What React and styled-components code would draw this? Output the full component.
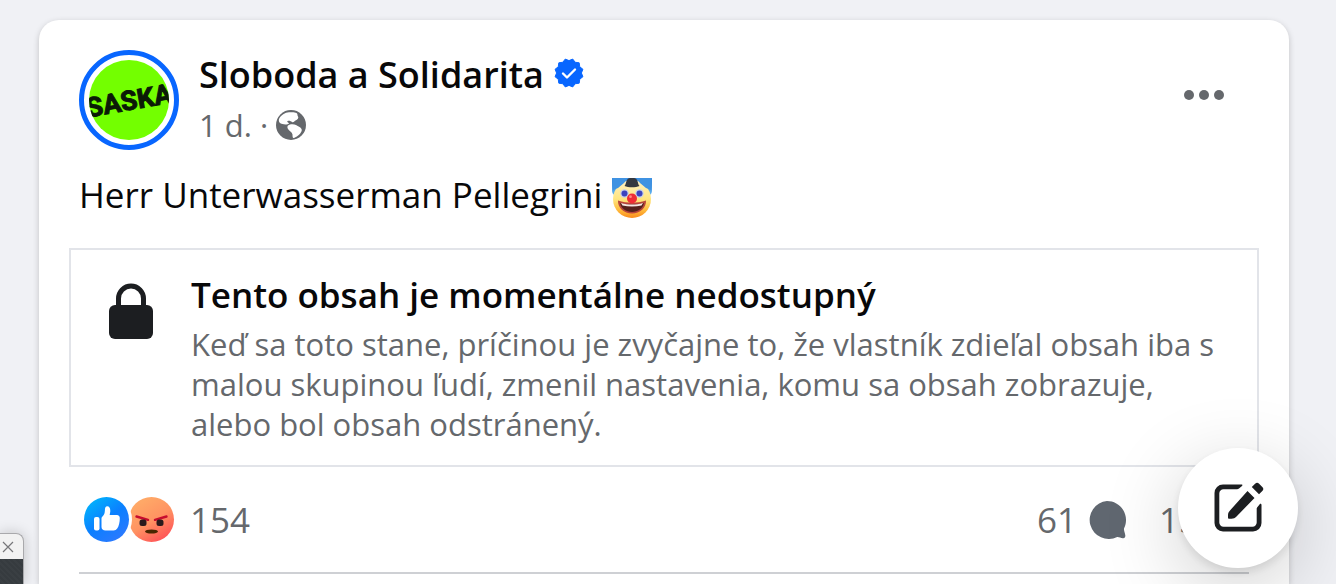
import React from "react";
import styled, { createGlobalStyle } from "styled-components";

const GlobalStyle = createGlobalStyle`
  *, *::before, *::after { box-sizing: border-box; }
  body {
    margin: 0;
    background: #f0f1f5;
    color: #080809;
    font-family: "Segoe UI", "Open Sans", "Noto Sans", sans-serif;
    overflow: hidden;
  }
  h2, h3, p { margin: 0; }
  a { color: inherit; text-decoration: none; }
  button {
    margin: 0;
    padding: 0;
    border: 0;
    background: none;
    color: inherit;
    font: inherit;
    cursor: pointer;
  }
  svg { display: block; flex: none; }
`;

const Page = styled.main`
  display: flex;
  min-height: 100vh;
  padding: 20px 47px 0 39px;
`;

const Card = styled.article`
  flex: 1;
  min-width: 0;
  background: #fff;
  border-radius: 20px 20px 0 0;
  box-shadow: 0 2px 6px rgba(0, 0, 0, 0.2);
`;

const Header = styled.header`
  display: flex;
  align-items: flex-start;
  gap: 20px;
  padding: 30px 64px 0 40px;
`;

const Author = styled.div`
  flex: 1;
  min-width: 0;
`;

const NameRow = styled.div`
  display: flex;
  align-items: center;
  gap: 10px;
  height: 50px;
`;

const Badge = styled.span`
  padding-bottom: 4px;
`;

const Name = styled.h2`
  font-size: 36px;
  line-height: 50px;
  font-weight: 600;
  white-space: nowrap;
`;

const Meta = styled.div`
  display: flex;
  align-items: center;
  gap: 8px;
  height: 50px;
  color: #65686c;
  font-size: 31px;
  line-height: 50px;
`;

const MoreButton = styled.button`
  margin-top: 25px;
  height: 40px;
  display: flex;
  align-items: center;
`;

const Message = styled.p`
  display: flex;
  align-items: center;
  gap: 10px;
  padding: 20px 40px 28px;
  font-size: 35px;
  line-height: 50px;
  white-space: nowrap;
`;

const Emoji = styled.span`
  padding-top: 6px;
`;

const Notice = styled.section`
  display: flex;
  gap: 38px;
  margin: 0 30px;
  padding: 20px 32px 20px 38px;
  border: 2px solid #e2e4e9;
`;

const NoticeIcon = styled.div`
  padding-top: 13px;
`;

const NoticeTitle = styled.h3`
  margin-bottom: 4px;
  font-size: 35px;
  line-height: 50px;
  font-weight: 600;
`;

const NoticeText = styled.p`
  margin-bottom: 1px;
  color: #65686c;
  font-size: 31px;
  line-height: 40px;
`;

const Feedback = styled.footer`
  display: flex;
  justify-content: space-between;
  margin: 0 40px;
  padding: 28px 0 27px;
  border-bottom: 2px solid #ced0d4;
`;

const Count = styled.button`
  display: flex;
  align-items: center;
  gap: ${(p) => p.$gap}px;
  height: 50px;
  color: #65686c;
  font-size: 35px;
  line-height: 50px;
`;

const Reactions = styled.span`
  display: flex;
  padding-left: 5px;
`;

const Counters = styled.div`
  display: flex;
  gap: 32px;
`;

const ComposeButton = styled.button`
  position: fixed;
  right: 38px;
  bottom: 16px;
  display: flex;
  align-items: center;
  justify-content: center;
  width: 120px;
  height: 120px;
  border-radius: 50%;
  background: #fff;
  box-shadow: 0 4px 10px rgba(0, 0, 0, 0.1), 0 20px 80px rgba(0, 0, 0, 0.2);
`;

const Preview = styled.aside`
  position: fixed;
  left: 0;
  bottom: 0;
  width: 24px;
  border: solid #a9a9ac;
  border-width: 1px 1px 0 0;
  border-radius: 0 8px 0 0;
  overflow: hidden;
  background: #f2f2f2;
  box-shadow: 0 0 14px rgba(0, 0, 0, 0.2);
`;

const CloseButton = styled.button`
  display: flex;
  align-items: center;
  width: 100%;
  height: 25px;
  padding-left: 2px;
`;

const PreviewBody = styled.div`
  height: 25px;
  background: repeating-linear-gradient(45deg, #363b3f 0 2px, #3a3f43 2px 4px);
`;

const Avatar = () => (
  <svg width="100" height="100" viewBox="0 0 100 100" role="img" aria-label="SASKA">
    <defs>
      <clipPath id="avatar"><circle cx="50" cy="50" r="40" /></clipPath>
    </defs>
    <circle cx="50" cy="50" r="47.5" fill="#fff" stroke="#0866ff" strokeWidth="5" />
    <g clipPath="url(#avatar)">
      <rect width="100" height="100" fill="#73ff00" />
      <text
        x="50"
        y="60"
        textAnchor="middle"
        transform="rotate(-10 50 50)"
        fontFamily="Roboto, sans-serif"
        fontWeight="700"
        fontSize="27"
        fill="#0b1a06"
        stroke="#0b1a06"
        strokeWidth="1"
      >
        SASKA
      </text>
    </g>
  </svg>
);

const Verified = () => {
  const points = Array.from({ length: 24 }, (_, i) => {
    const r = i % 2 ? 12.4 : 14.4;
    const a = ((i * 15 + 15) * Math.PI) / 180;
    return `${14 + r * Math.sin(a)},${14 - r * Math.cos(a)}`;
  }).join(" ");
  return (
    <svg width="30" height="30" viewBox="-1 -1 30 30" role="img" aria-label="Overený účet">
      <polygon points={points} fill="#0866ff" stroke="#0866ff" strokeLinejoin="round" />
      <path d="M8 14.500l4 4 8-8" fill="none" stroke="#fff" strokeWidth="2.400" strokeLinecap="round" strokeLinejoin="round" />
    </svg>
  );
};

const Globe = () => (
  <svg width="30" height="30" viewBox="0 0 30 30" role="img" aria-label="Verejné">
    <circle cx="15" cy="15" r="15" fill="#65686c" />
    <path
      fill="#fff"
      d="M3 9C5 5 9 2.500 13 2.300C16 2 19 2 20.500 3C22 4 21 5 22 6.500C23 8 21.500 9.500 19.500 10.500C18 11.500 17.500 12.800 16 12C15 11 13 10.200 11.500 11C10.500 12 12.500 12.500 13 13.500C11.500 14.800 8 14.500 6.500 14C4 13.500 2.300 12 3 9z"
    />
    <path
      fill="#fff"
      d="M12 15.500C14 13.800 18 13.800 20 15C22 16.800 25.500 17 25.800 20C25.500 23 22 26.500 18 28C16.500 28.500 16.500 26 16.500 24.500C16 22 13 21 12 19C11.200 17.500 11.200 16.300 12 15.500z"
    />
  </svg>
);

const Dots = () => (
  <svg width="42" height="12" viewBox="0 0 42 12" fill="#65686c" aria-hidden="true">
    <circle cx="6" cy="6" r="5" />
    <circle cx="21" cy="6" r="5" />
    <circle cx="36" cy="6" r="5" />
  </svg>
);

const Clown = () => (
  <svg width="40" height="40" viewBox="0 0 40 40" role="img" aria-label="🤡">
    <defs>
      <linearGradient id="clownFace" x1="0" y1="0" x2="0" y2="1">
        <stop offset="0" stopColor="#fff0c4" />
        <stop offset=".5" stopColor="#ffe680" />
        <stop offset=".8" stopColor="#ffb93a" />
        <stop offset="1" stopColor="#f98a1c" />
      </linearGradient>
      <linearGradient id="clownHair" x1="0" y1="0" x2="0" y2="1">
        <stop offset="0" stopColor="#2f80d4" />
        <stop offset="1" stopColor="#62b5f3" />
      </linearGradient>
    </defs>
    <path d="M0 0h40v12c0 3-1 5-4 6H4c-3-1-4-3-4-6z" fill="url(#clownHair)" />
    <circle cx="20" cy="21" r="19" fill="url(#clownFace)" />
    <path d="M0 0h16l-4 5-6 5-5 2zM40 0H24l4 5 6 5 5 2z" fill="#3f92e2" />
    <path d="M12.500 8c2-2 1-5.500 4-7.500 2-1 5-1 7 0 3 2 2 5.500 4 7.500-4 1.800-11 1.800-15 0z" fill="#34383f" />
    <circle cx="12.500" cy="15.500" r="4.200" fill="#c3cdec" />
    <circle cx="27.500" cy="15.500" r="4.200" fill="#c3cdec" />
    <circle cx="12.500" cy="15.500" r="3" fill="#3d44bd" />
    <circle cx="27.500" cy="15.500" r="3" fill="#3d44bd" />
    <path d="M6 22.500c9 3 19 3 28 0 .5 7-6 13-14 13S5.500 29.500 6 22.500z" fill="#b9453a" />
    <path d="M8 25c7 2 17 2 24 0-1 5.500-6 9-12 9s-11-3.500-12-9z" fill="#54211c" />
    <path d="M9 25c7 2 15 2 22 0l-1.500 2.500c-6 1.300-13 1.300-19 0z" fill="#f5e6e2" />
    <circle cx="20" cy="20.500" r="5" fill="#ef2d35" />
    <circle cx="18.500" cy="18.700" r="1.400" fill="#ff8a83" />
  </svg>
);

const Lock = () => (
  <svg width="44" height="56" viewBox="0 0 44 56" aria-hidden="true">
    <path d="M9.500 25V15.500a12.500 12.500 0 0 1 25 0V25" fill="none" stroke="#1c1e21" strokeWidth="5" />
    <rect y="22" width="44" height="34" rx="6" fill="#1c1e21" />
  </svg>
);

const ReactionIcons = () => (
  <svg width="91" height="46" viewBox="0 0 91 46" role="img" aria-label="Páči sa mi to, Hnevá ma to">
    <defs>
      <linearGradient id="like" x1=".2" y1=".1" x2=".8" y2=".9">
        <stop offset="0" stopColor="#02adfc" />
        <stop offset=".5" stopColor="#0b7fff" />
        <stop offset="1" stopColor="#2a7aff" />
      </linearGradient>
      <linearGradient id="angry" x1=".3" y1=".1" x2=".8" y2=".9">
        <stop offset="0" stopColor="#ffa867" />
        <stop offset=".5" stopColor="#ff9362" />
        <stop offset="1" stopColor="#ff5758" />
      </linearGradient>
    </defs>
    <circle cx="67.500" cy="22.500" r="22.500" fill="url(#angry)" />
    <path d="M52.500 19.500l11.500 3.300M82.500 19.500L71 22.800" stroke="#c60d2e" strokeWidth="2.400" strokeLinecap="round" />
    <rect x="55.500" y="22.500" width="7" height="6.500" rx="2.500" fill="#2b1a1c" />
    <rect x="72.500" y="22.500" width="7" height="6.500" rx="2.500" fill="#2b1a1c" />
    <ellipse cx="67.500" cy="34.500" rx="6.500" ry="2" fill="#4b2600" />
    <circle cx="22.500" cy="22.500" r="25.500" fill="#fff" />
    <circle cx="22.500" cy="22.500" r="22.500" fill="url(#like)" />
    <rect x="10" y="20" width="5.500" height="13.500" rx="2" fill="#fff" />
    <path
      d="M17.500 21.500c0-1 .5-1.500 1.200-2.200 1.600-1.600 2-3.300 2.200-6.100.1-2.500.5-4 2.400-4 2.300 0 3 2.500 3 4.800 0 1.500-.6 3-.6 4h7.300c1.700 0 2.800 1.400 2.800 3 0 4-.8 8-2.600 10.600-.9 1.300-2 1.900-3.600 1.900h-8.100c-2.400 0-4-1.300-4-3.500z"
      fill="#fff"
    />
  </svg>
);

const Comment = () => (
  <svg width="40" height="40" viewBox="0 0 40 40" aria-hidden="true">
    <path
      d="M20 1a19 19 0 0 1 17 27.500c-.3 1 .4 3 1.200 6.200.5 2.200-.4 3.800-2.400 3.500-2-.3-4-1.500-5.600-1.300A19 19 0 1 1 20 1z"
      fill="#606770"
    />
  </svg>
);

const Share = () => (
  <svg width="40" height="40" viewBox="0 0 40 40" aria-hidden="true">
    <path d="M22 5l16 14-16 14v-8C13 25 7 28 2 35c1-12 8-21 20-22z" fill="#606770" />
  </svg>
);

const Compose = () => (
  <svg width="52" height="52" viewBox="0 0 52 52" fill="#1c1e21" aria-hidden="true">
    <path d="M29.500 2.500H11a8.500 8.500 0 0 0-8.500 8.500v30a8.500 8.500 0 0 0 8.500 8.500h30a8.500 8.500 0 0 0 8.500-8.500V23c0-1.200-1-1.600-1.800-.8L45.500 25c-.7.700-.8 1.200-.8 2v13.500a4.200 4.200 0 0 1-4.200 4.200h-29a4.200 4.200 0 0 1-4.200-4.200v-29a4.200 4.200 0 0 1 4.200-4.200H25c.8 0 1.400-.2 2-.8l3-2.500c.7-.8.500-1.500-.5-1.500z" />
    <path d="M35.500 9l7 7L24.500 34.500c-1.500 1.500-3 2.200-5 2.200H17.300c-.9 0-1.300-.4-1.300-1.300v-2.200c0-2 .7-3.500 2.200-5z" />
    <path d="M39.800 5l3.300-3.300a2.800 2.800 0 0 1 4 0l3.200 3.200a2.800 2.800 0 0 1 0 4L47 12.200z" />
  </svg>
);

const Close = () => (
  <svg width="12" height="12" viewBox="0 0 12 12" aria-hidden="true">
    <path d="M1 1l10 10M11 1L1 11" stroke="#77777a" strokeWidth="1.200" />
  </svg>
);

export default function App() {
  return (
    <>
      <GlobalStyle />
      <Page>
        <Card>
          <Header>
            <a href="#profile"><Avatar /></a>
            <Author>
              <NameRow>
                <Name><a href="#profile">Sloboda a Solidarita</a></Name>
                <Badge><Verified /></Badge>
              </NameRow>
              <Meta>
                <a href="#post">1 d.</a>
                <span>·</span>
                <Globe />
              </Meta>
            </Author>
            <MoreButton type="button" aria-label="Ďalšie možnosti"><Dots /></MoreButton>
          </Header>
          <Message>Herr Unterwasserman Pellegrini <Emoji><Clown /></Emoji></Message>
          <Notice>
            <NoticeIcon><Lock /></NoticeIcon>
            <div>
              <NoticeTitle>Tento obsah je momentálne nedostupný</NoticeTitle>
              <NoticeText>
                Keď sa toto stane, príčinou je zvyčajne to, že vlastník zdieľal obsah iba s
                malou skupinou ľudí, zmenil nastavenia, komu sa obsah zobrazuje,
                alebo bol obsah odstránený.
              </NoticeText>
            </div>
          </Notice>
          <Feedback>
            <Count type="button" $gap={15}>
              <Reactions><ReactionIcons /></Reactions>
              154
            </Count>
            <Counters>
              <Count type="button" $gap={10}>61 <Comment /></Count>
              <Count type="button" $gap={10}>15 <Share /></Count>
            </Counters>
          </Feedback>
        </Card>
      </Page>
      <ComposeButton type="button" aria-label="Nový príspevok"><Compose /></ComposeButton>
      <Preview>
        <CloseButton type="button" aria-label="Zavrieť"><Close /></CloseButton>
        <PreviewBody />
      </Preview>
    </>
  );
}
